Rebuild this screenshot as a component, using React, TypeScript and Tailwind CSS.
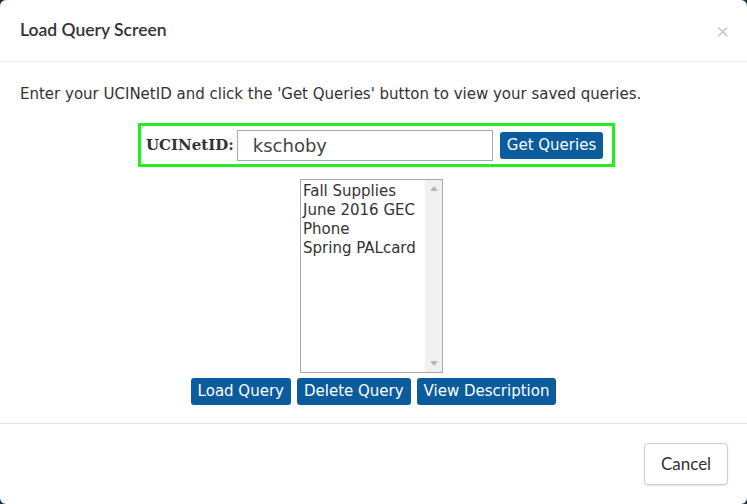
const items = ["Fall Supplies", "June 2016 GEC", "Phone", "Spring PALcard"];

const Btn = ({ children }: { children: React.ReactNode }) => (
  <button className="h-[27px] rounded-[3px] bg-[#0b5c9c] px-[7px] text-[15px] leading-none text-white">
    {children}
  </button>
);

export default function App() {
  return (
    <div className="h-[504px] w-[747px] bg-[#123342]">
      <div className="flex h-full flex-col rounded-[6px] bg-white">
        {/* header */}
        <div className="flex h-[62px] items-center justify-between border-b border-[#e5e5e5] pl-[20px] pr-[18px] font-['Lato',sans-serif]">
          <h1 className="text-[17.5px] font-semibold text-[#333]">Load Query Screen</h1>
          <span className="text-[22px] leading-none text-[#c8c8c8]">&times;</span>
        </div>

        {/* body */}
        <div className="flex flex-1 flex-col items-center font-['DejaVu_Sans',sans-serif] text-[#333]">
          <p className="mt-[22px] self-start pl-[20px] text-[15px] leading-[20px]">
            Enter your UCINetID and click the 'Get Queries' button to view your saved queries.
          </p>

          <div className="ml-[6px] mt-[19px] flex h-[44px] w-[477px] items-center border-[3px] border-[#22ee22] pl-[5px]">
            <label className="font-['DejaVu_Serif',serif] text-[15px] font-bold text-[#333]">UCINetID:</label>
            <div className="ml-[3px] flex h-[31px] w-[256px] items-center border border-[#a2a9c2] pl-[15px] text-[18px] text-[#444]">
              kschoby
            </div>
            <div className="ml-[7px]">
              <Btn>Get Queries</Btn>
            </div>
          </div>

          <div className="mr-[4px] mt-[12px] flex h-[194px] w-[143px] border border-[#a9a9a9]">
            <div className="flex-1 pl-[2px] pt-[2px] text-[15px] leading-[19px] text-[#333]">
              {items.map((it) => (
                <div key={it} className="whitespace-nowrap">{it}</div>
              ))}
            </div>
            <div className="flex w-[17px] flex-col items-center justify-between bg-[#f0f0f0] py-[6px]">
              <svg width="8" height="5" viewBox="0 0 8 5"><path d="M0 5 L4 0 L8 5 Z" fill="#b8b8b8" /></svg>
              <svg width="8" height="5" viewBox="0 0 8 5"><path d="M0 0 L4 5 L8 0 Z" fill="#b8b8b8" /></svg>
            </div>
          </div>

          <div className="mt-[5px] flex gap-[6px]">
            <Btn>Load Query</Btn>
            <Btn>Delete Query</Btn>
            <Btn>View Description</Btn>
          </div>
        </div>

        {/* footer */}
        <div className="flex h-[81px] items-center justify-end border-t border-[#e5e5e5] pr-[19px] font-['Lato',sans-serif]">
          <button className="h-[42px] w-[84px] rounded-[4px] border border-[#cccccc] bg-white text-[17px] text-[#333] shadow-[0_1px_2px_rgba(0,0,0,0.1)]">
            Cancel
          </button>
        </div>
      </div>
    </div>
  );
}
